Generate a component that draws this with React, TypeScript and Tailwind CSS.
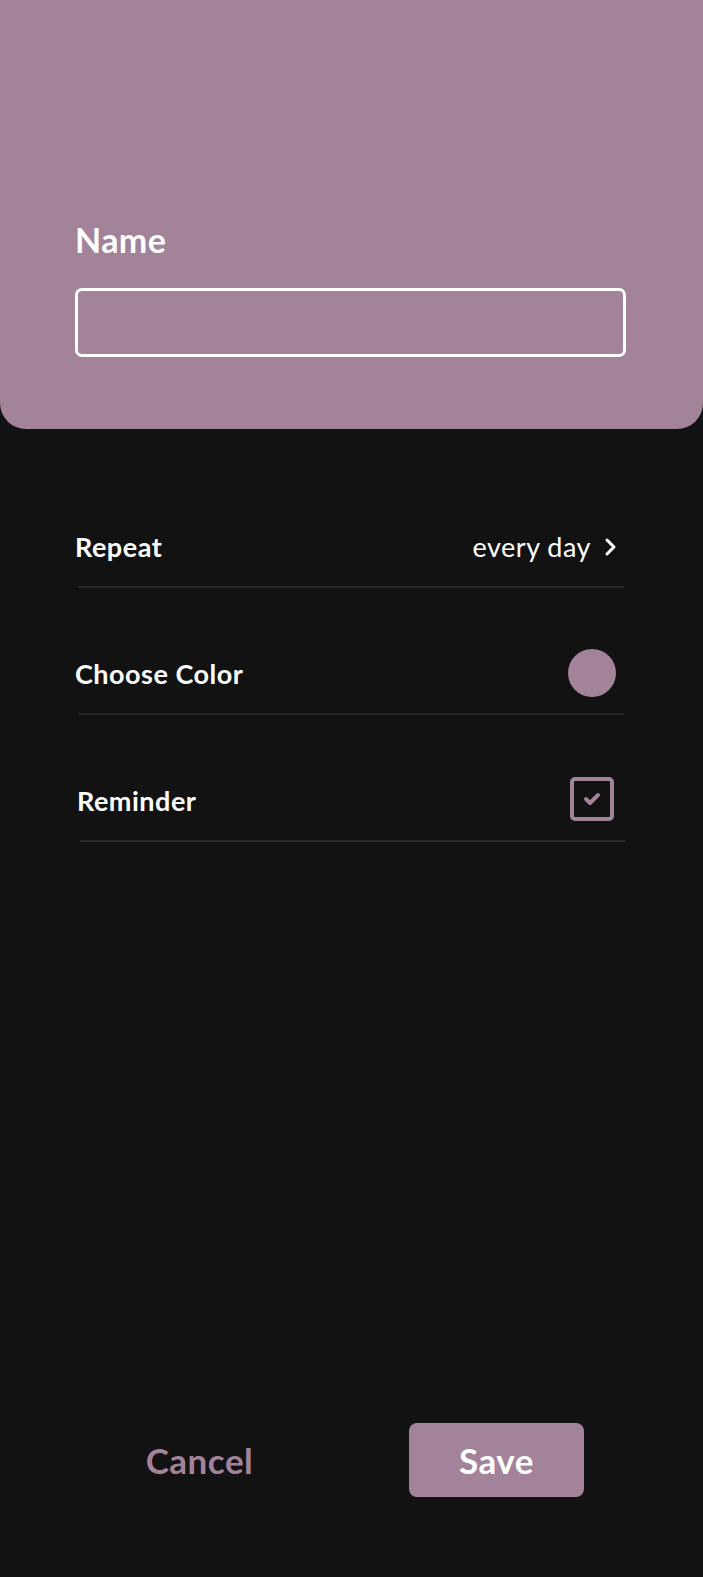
import React from "react";

const font = { fontFamily: "Lato, 'Noto Sans', sans-serif" };

export default function App() {
  return (
    <div className="min-h-[1577px] w-full bg-[#121212] flex flex-col text-white" style={font}>
      <div className="h-[429px] bg-[#a2839a] rounded-b-[26px] px-[75px] pt-[220px] flex flex-col">
        <div className="text-[34px] font-bold leading-[40px] tracking-[0.4px]">Name</div>
        <div className="mt-[28px] h-[69px] w-[551px] border-[3px] border-white rounded-[7px]" />
      </div>

      <div className="pt-[79px] flex flex-col">
        <div className="h-[80px] ml-[78px] mr-[79px] border-b-2 border-[#262626] flex items-center justify-between">
          <span className="-ml-[3px] text-[27px] font-bold tracking-[0.5px]">Repeat</span>
          <span className="flex items-center">
            <span className="text-[27px] font-normal tracking-[0.5px]">every day</span>
            <svg width="14" height="20" viewBox="0 0 14 20" className="ml-[13px] mr-[6px]">
              <path d="M3 3 L10 10 L3 17" stroke="white" strokeWidth="3" fill="none" strokeLinecap="round" strokeLinejoin="round" />
            </svg>
          </span>
        </div>

        <div className="mt-[47px] h-[80px] ml-[78px] mr-[79px] border-b-2 border-[#262626] flex items-center justify-between">
          <span className="-ml-[3px] text-[27px] font-bold tracking-[0.5px]">Choose Color</span>
          <span className="w-[48px] h-[48px] rounded-full bg-[#a2839a] mr-[8px] -mt-[2px]" />
        </div>

        <div className="mt-[47px] h-[80px] ml-[80px] mr-[77px] border-b-2 border-[#262626] flex items-center justify-between">
          <span className="-ml-[3px] text-[27px] font-bold tracking-[0.5px]">Reminder</span>
          <span className="w-[44px] h-[44px] border-[4px] border-[#a2839a] rounded-[5px] mr-[12px] -mt-[4px] flex items-center justify-center">
            <svg width="20" height="16" viewBox="0 0 20 16">
              <path d="M4 8 L8 12 L16 4" stroke="#a2839a" strokeWidth="4" fill="none" strokeLinecap="round" strokeLinejoin="round" />
            </svg>
          </span>
        </div>
      </div>

      <div className="mt-auto pb-[80px] flex items-center">
        <button className="ml-[112px] w-[175px] h-[74px] text-[35px] font-bold tracking-[0.5px] text-[#a2839a]">Cancel</button>
        <button className="ml-[122px] w-[175px] h-[74px] rounded-[8px] bg-[#a2839a] text-[35px] font-bold tracking-[0.5px] text-white">Save</button>
      </div>
    </div>
  );
}
